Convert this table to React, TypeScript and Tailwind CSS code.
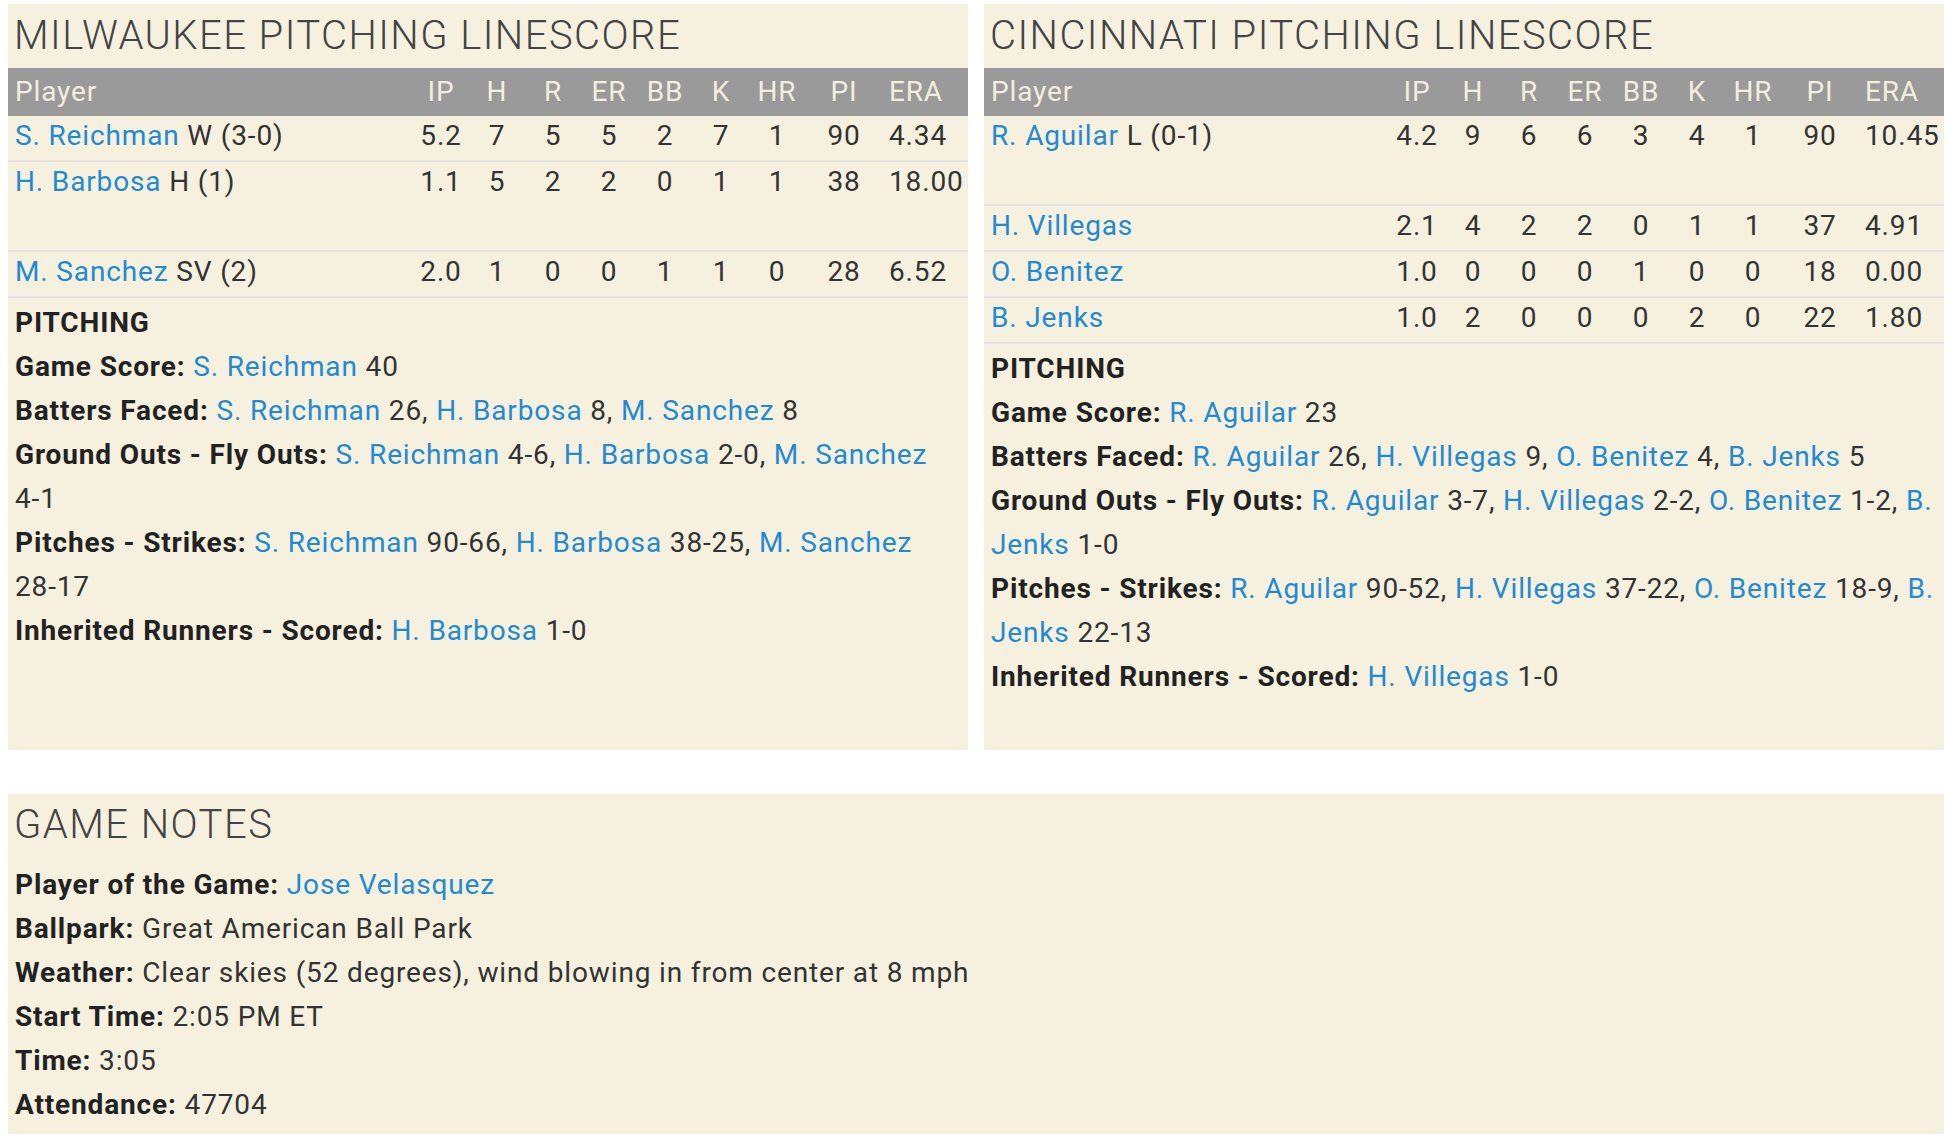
import React from 'react';

interface PitcherLine {
    name: string;
    note?: string;
    stats: string[];
    tall?: boolean;
}

const cols = ['IP', 'H', 'R', 'ER', 'BB', 'K', 'HR', 'PI', 'ERA'];

const milwaukee: PitcherLine[] = [
    { name: 'S. Reichman', note: 'W (3-0)', stats: ['5.2', '7', '5', '5', '2', '7', '1', '90', '4.34'] },
    { name: 'H. Barbosa', note: 'H (1)', stats: ['1.1', '5', '2', '2', '0', '1', '1', '38', '18.00'], tall: true },
    { name: 'M. Sanchez', note: 'SV (2)', stats: ['2.0', '1', '0', '0', '1', '1', '0', '28', '6.52'] },
];

const cincinnati: PitcherLine[] = [
    { name: 'R. Aguilar', note: 'L (0-1)', stats: ['4.2', '9', '6', '6', '3', '4', '1', '90', '10.45'], tall: true },
    { name: 'H. Villegas', stats: ['2.1', '4', '2', '2', '0', '1', '1', '37', '4.91'] },
    { name: 'O. Benitez', stats: ['1.0', '0', '0', '0', '1', '0', '0', '18', '0.00'] },
    { name: 'B. Jenks', stats: ['1.0', '2', '0', '0', '0', '2', '0', '22', '1.80'] },
];

const grid = 'grid grid-cols-[405px_56px_56px_56px_56px_56px_56px_56px_78px_85px]';

function A({ children }: { children: React.ReactNode }) {
    return <a className="text-[#2389d1] cursor-pointer">{children}</a>;
}

function B({ children }: { children: React.ReactNode }) {
    return <span className="font-bold text-[#222]">{children}</span>;
}

function Linescore({ title, rows, children }: { title: string; rows: PitcherLine[]; children: React.ReactNode }) {
    return (
        <div className="w-[960px] bg-[#f6f1df] pb-[51px]">
            <h2 className="pl-[6px] pt-[8px] pb-[8px] text-[40px] leading-[48px] font-light tracking-[1.45px] text-[#444] whitespace-nowrap">
                {title}
            </h2>
            <div className={`${grid} h-[48px] bg-[#9a9a9a] text-[28px] leading-[48px] text-[#f3eedc]`}>
                <div className="pl-[7px]">Player</div>
                {cols.map((c) => (
                    <div key={c} className={c === 'ERA' ? 'pl-[6px] whitespace-nowrap' : 'text-center'}>
                        {c}
                    </div>
                ))}
            </div>
            {rows.map((r) => (
                <div
                    key={r.name}
                    className={`${grid} ${r.tall ? 'h-[90px]' : 'h-[46px]'} border-b-2 border-[#e5e3e3] text-[28px] leading-[40px] text-[#333]`}
                >
                    <div className="pl-[7px] whitespace-nowrap">
                        <A>{r.name}</A>
                        {r.note && <span> {r.note}</span>}
                    </div>
                    {r.stats.map((s, i) => (
                        <div key={i} className={i === 8 ? 'pl-[6px] whitespace-nowrap' : 'text-center'}>
                            {s}
                        </div>
                    ))}
                </div>
            ))}
            <div className="pt-[3px] pl-[7px] text-[28px] leading-[44px] text-[#333] whitespace-nowrap">{children}</div>
        </div>
    );
}

export default function App() {
    return (
        <div className="w-[1950px] min-h-[1138px] bg-white px-[8px] pt-[4px] pb-[5px] font-[Roboto,sans-serif] tracking-[0.85px]">
            <div className="flex gap-[16px] items-stretch">
                <Linescore title="MILWAUKEE PITCHING LINESCORE" rows={milwaukee}>
                    <div><B>PITCHING</B></div>
                    <div><B>Game Score:</B> <A>S. Reichman</A> 40</div>
                    <div><B>Batters Faced:</B> <A>S. Reichman</A> 26, <A>H. Barbosa</A> 8, <A>M. Sanchez</A> 8</div>
                    <div>
                        <B>Ground Outs - Fly Outs:</B> <A>S. Reichman</A> 4-6, <A>H. Barbosa</A> 2-0, <A>M. Sanchez</A>
                        <br />4-1
                    </div>
                    <div>
                        <B>Pitches - Strikes:</B> <A>S. Reichman</A> 90-66, <A>H. Barbosa</A> 38-25, <A>M. Sanchez</A>
                        <br />28-17
                    </div>
                    <div><B>Inherited Runners - Scored:</B> <A>H. Barbosa</A> 1-0</div>
                </Linescore>
                <Linescore title="CINCINNATI PITCHING LINESCORE" rows={cincinnati}>
                    <div><B>PITCHING</B></div>
                    <div><B>Game Score:</B> <A>R. Aguilar</A> 23</div>
                    <div><B>Batters Faced:</B> <A>R. Aguilar</A> 26, <A>H. Villegas</A> 9, <A>O. Benitez</A> 4, <A>B. Jenks</A> 5</div>
                    <div>
                        <B>Ground Outs - Fly Outs:</B> <A>R. Aguilar</A> 3-7, <A>H. Villegas</A> 2-2, <A>O. Benitez</A> 1-2, <A>B.</A>
                        <br /><A>Jenks</A> 1-0
                    </div>
                    <div>
                        <B>Pitches - Strikes:</B> <A>R. Aguilar</A> 90-52, <A>H. Villegas</A> 37-22, <A>O. Benitez</A> 18-9, <A>B.</A>
                        <br /><A>Jenks</A> 22-13
                    </div>
                    <div><B>Inherited Runners - Scored:</B> <A>H. Villegas</A> 1-0</div>
                </Linescore>
            </div>
            <div className="mt-[44px] w-[1936px] bg-[#f6f1df] pb-[7px]">
                <h2 className="pl-[6px] pt-[7px] mb-[14px] text-[40px] leading-[48px] font-light tracking-[1.45px] text-[#444]">GAME NOTES</h2>
                <div className="pl-[7px] text-[28px] leading-[44px] text-[#333]">
                    <div><B>Player of the Game:</B> <A>Jose Velasquez</A></div>
                    <div><B>Ballpark:</B> Great American Ball Park</div>
                    <div><B>Weather:</B> Clear skies (52 degrees), wind blowing in from center at 8 mph</div>
                    <div><B>Start Time:</B> 2:05 PM ET</div>
                    <div><B>Time:</B> 3:05</div>
                    <div><B>Attendance:</B> 47704</div>
                </div>
            </div>
        </div>
    );
}
